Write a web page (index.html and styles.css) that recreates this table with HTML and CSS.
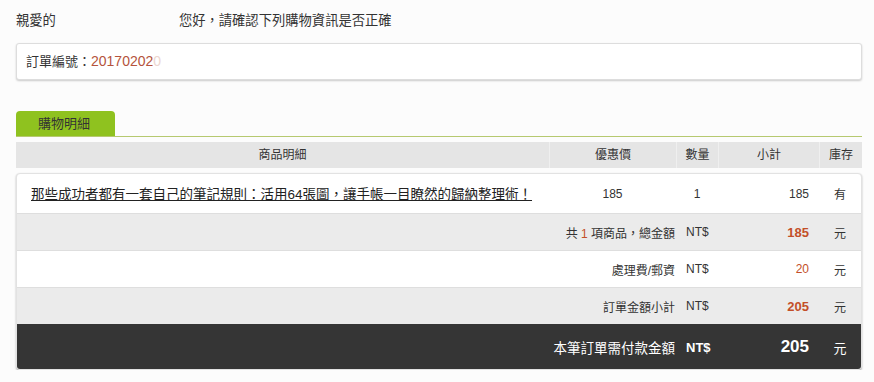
FILE: index.html
```html
<!DOCTYPE html>
<html lang="zh-Hant">
<head>
  <meta charset="UTF-8">
  <meta name="viewport" content="width=device-width, initial-scale=1.0">
  <title>確認購物資訊</title>
  <link rel="stylesheet" href="styles.css">
</head>
<body>
  <p class="greeting">親愛的<span class="masked"></span>您好，請確認下列購物資訊是否正確</p>

  <div class="order-box">
    訂單編號：<span class="order-no">20170202</span><span class="order-no faded">0</span>
  </div>

  <div class="detail">
    <div class="tab-bar">
      <div class="tab">購物明細</div>
    </div>

    <div class="cols head-row">
      <div class="cell center">商品明細</div>
      <div class="cell center">優惠價</div>
      <div class="cell center">數量</div>
      <div class="cell center">小計</div>
      <div class="cell center">庫存</div>
    </div>

    <div class="card">
      <div class="cols item-row">
        <div class="cell title"><a href="#">那些成功者都有一套自己的筆記規則：活用64張圖，讓手帳一目瞭然的歸納整理術！</a></div>
        <div class="cell center">185</div>
        <div class="cell center">1</div>
        <div class="cell right">185</div>
        <div class="cell center">有</div>
      </div>

      <div class="cols sum-row grey">
        <div class="cell label">共 <span class="red">1</span> 項商品，總金額</div>
        <div class="cell cur">NT$</div>
        <div class="cell right red strong">185</div>
        <div class="cell center">元</div>
      </div>

      <div class="cols sum-row">
        <div class="cell label">處理費/郵資</div>
        <div class="cell cur">NT$</div>
        <div class="cell right red">20</div>
        <div class="cell center">元</div>
      </div>

      <div class="cols sum-row grey">
        <div class="cell label">訂單金額小計</div>
        <div class="cell cur">NT$</div>
        <div class="cell right red strong">205</div>
        <div class="cell center">元</div>
      </div>

      <div class="cols sum-row total">
        <div class="cell label">本筆訂單需付款金額</div>
        <div class="cell cur strong">NT$</div>
        <div class="cell right strong big">205</div>
        <div class="cell center">元</div>
      </div>
    </div>
  </div>
</body>
</html>
```

FILE: styles.css
```css
body {
  margin: 0;
  padding: 0 12px 0 16px;
  font-family: "Liberation Sans", "Noto Sans CJK TC", sans-serif;
  font-size: 13px;
  color: #333;
  background-color: #fcfcfc;
}

.greeting {
  margin: 11px 0 0;
  line-height: 18px;
  font-size: 13.3px;
}

.masked {
  display: inline-block;
  width: 123px;
  height: 14px;
}

.order-box {
  margin-top: 13px;
  height: 35px;
  line-height: 35px;
  padding: 0 9px;
  background-color: #fff;
  border: 1px solid #ddd;
  border-radius: 3px;
  box-shadow: 0 1px 2px rgba(0, 0, 0, 0.2);
}

.order-no {
  color: #b5533c;
  font-size: 14px;
}

.order-no.faded {
  color: #ecd6d0;
}

.detail {
  margin-top: 31px;
}

.tab-bar {
  border-bottom: 1px solid #b6c970;
}

.tab {
  width: 77px;
  height: 25px;
  line-height: 25px;
  padding-left: 22px;
  background-color: #8fc21f;
  border-radius: 4px 4px 0 0;
  color: #333;
}

/* shared column widths for header and rows */
.cols {
  display: grid;
  grid-template-columns: 533px 127px 42px 101px 1fr;
  align-items: center;
}

.cell {
  white-space: nowrap;
}

.center {
  text-align: center;
}

.right {
  text-align: right;
  padding-right: 10px;
}

.head-row {
  margin-top: 5px;
  height: 26px;
  background-color: #e5e5e5;
  font-size: 12px;
}

.head-row .cell {
  height: 26px;
  line-height: 26px;
  border-left: 1px solid #efefef;
}

.head-row .cell:first-child {
  border-left: none;
}

.card {
  margin-top: 5px;
  background-color: #fff;
  border: 1px solid #e2e2e2;
  border-radius: 4px;
  overflow: hidden;
  box-shadow: 0 1px 2px rgba(0, 0, 0, 0.3);
}

.card .cols {
  grid-template-columns: 532px 127px 42px 101px 1fr;
}

.item-row {
  height: 39px;
  font-size: 12px;
}

.item-row .title {
  padding-left: 14px;
  padding-bottom: 2px;
  font-size: 13.5px;
}

.title a {
  color: #222;
  text-decoration: underline;
}

.sum-row {
  height: 36px;
  font-size: 12px;
  border-top: 1px solid #dedede;
}

.sum-row .label {
  grid-column: 1 / 3;
  text-align: right;
  padding-right: 1px;
}

.sum-row .cur {
  padding-left: 10px;
}

.grey {
  background-color: #ebebeb;
}

.red {
  color: #c34f28;
}

.strong {
  font-weight: bold;
  font-size: 13px;
}

.total {
  height: 44px;
  background-color: #353535;
  color: #fff;
  border-top-color: #353535;
}

.total .label {
  font-size: 13.5px;
}

.total .big {
  font-size: 17px;
}

.total .center {
  font-size: 13px;
}
```
